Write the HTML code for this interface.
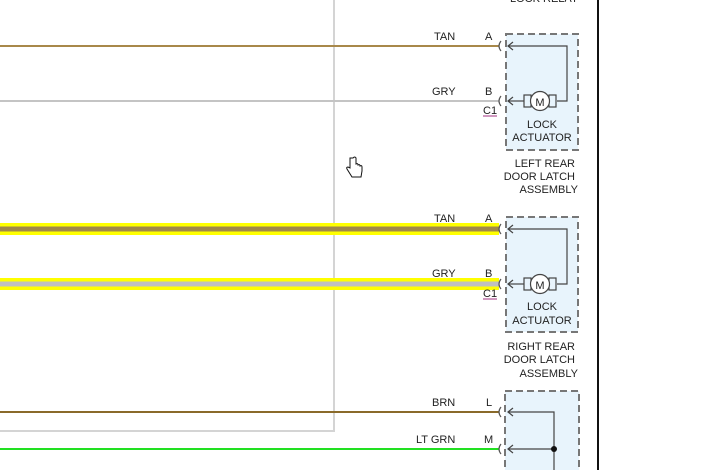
<!DOCTYPE html>
<html><head><meta charset="utf-8"><style>
html,body{margin:0;padding:0;background:#fff;}
svg{display:block;}
text{font-family:"Liberation Sans",Arial,sans-serif;font-size:11px;fill:#222;}
</style></head><body>
<svg width="704" height="470" viewBox="0 0 704 470" xmlns="http://www.w3.org/2000/svg">
<rect width="704" height="470" fill="#fff"/>
<line x1="334" y1="0" x2="334" y2="431" stroke="#d4d4d4" stroke-width="2"/>
<line x1="0" y1="431" x2="335" y2="431" stroke="#d4d4d4" stroke-width="2"/>
<line x1="598" y1="0" x2="598" y2="470" stroke="#111" stroke-width="2"/>
<text x="510" y="2" font-size="11">LOCK RELAY</text>

<line x1="0" y1="46" x2="499" y2="46" stroke="#a8884a" stroke-width="2"/>
<line x1="0" y1="101" x2="499" y2="101" stroke="#c4c4c4" stroke-width="2"/>
<text x="434" y="40">TAN</text><text x="485" y="40">A</text>
<text x="432" y="95">GRY</text><text x="485" y="95">B</text>
<text x="483" y="114" fill="#333">C1</text><line x1="483" y1="116" x2="497" y2="116" stroke="#a03080" stroke-width="1"/>

<rect x="0" y="223" width="499" height="12" fill="#ffff00"/>
<line x1="0" y1="229" x2="499" y2="229" stroke="#a0884a" stroke-width="5"/>
<rect x="0" y="278" width="499" height="12" fill="#ffff00"/>
<line x1="0" y1="284" x2="499" y2="284" stroke="#c0c0c0" stroke-width="5"/>
<text x="434" y="222">TAN</text><text x="485" y="222">A</text>
<text x="432" y="277">GRY</text><text x="485" y="277">B</text>
<text x="483" y="297" fill="#333">C1</text><line x1="483" y1="299" x2="497" y2="299" stroke="#a03080" stroke-width="1"/>

<line x1="0" y1="412" x2="499" y2="412" stroke="#8a6a2a" stroke-width="2"/>
<line x1="0" y1="449" x2="499" y2="449" stroke="#22e022" stroke-width="2"/>
<text x="432" y="406">BRN</text><text x="486" y="406">L</text>
<text x="416" y="443">LT GRN</text><text x="484" y="443" fill="#1a3a9a">M</text>

<g fill="none" stroke="#555" stroke-width="1.2">
<path d="M501 41 Q497 46 501 51"/><path d="M501 96 Q497 101 501 106"/>
<path d="M501 224 Q497 229 501 234"/><path d="M501 279 Q497 284 501 289"/>
<path d="M501 407 Q497 412 501 417"/><path d="M501 444 Q497 449 501 454"/>
</g>

<g stroke="#777" stroke-width="2" stroke-dasharray="7,4" fill="#e8f4fc">
<rect x="506" y="34" width="72" height="116"/>
<rect x="506" y="217" width="72" height="115"/>
<rect x="505" y="391" width="74" height="85"/>
</g>

<g fill="none" stroke="#444" stroke-width="1.2">
<path d="M508 46 H567 V101 H557"/>
<path d="M513 42 L508 46 L513 50"/>
<path d="M524 101 H508"/><path d="M513 97 L508 101 L513 105"/>
<rect x="524" y="95" width="7" height="12"/><rect x="549" y="95" width="7" height="12"/>
<circle cx="540" cy="101" r="9.5" fill="#fff"/>
<path d="M508 229 H567 V284 H557"/>
<path d="M513 225 L508 229 L513 233"/>
<path d="M524 284 H508"/><path d="M513 280 L508 284 L513 288"/>
<rect x="524" y="278" width="7" height="12"/><rect x="549" y="278" width="7" height="12"/>
<circle cx="540" cy="284" r="9.5" fill="#fff"/>
<path d="M508 412 H554 V470"/><path d="M513 408 L508 412 L513 416"/>
<path d="M508 449 H554"/><path d="M513 445 L508 449 L513 453"/>
</g>
<circle cx="554" cy="449" r="3" fill="#111"/>
<text x="540" y="106" text-anchor="middle" font-size="14">M</text>
<text x="540" y="289" text-anchor="middle" font-size="14">M</text>

<text x="542" y="128" text-anchor="middle">LOCK</text>
<text x="542" y="141" text-anchor="middle">ACTUATOR</text>
<text x="575" y="167" text-anchor="end">LEFT REAR</text>
<text x="575" y="180" text-anchor="end">DOOR LATCH</text>
<text x="578" y="193" text-anchor="end">ASSEMBLY</text>

<text x="542" y="310" text-anchor="middle">LOCK</text>
<text x="542" y="324" text-anchor="middle">ACTUATOR</text>
<text x="575" y="350" text-anchor="end">RIGHT REAR</text>
<text x="575" y="363" text-anchor="end">DOOR LATCH</text>
<text x="578" y="377" text-anchor="end">ASSEMBLY</text>

<path d="M350 158 v10 l-2 -1 q-2 0 -1 2 l5 8 h9 l1 -6 v-4 q0 -2 -2 -1 q0 -2 -2 -1 q0 -2 -2 -1 v-6 q-1 -2 -3 0 z" fill="#fff" stroke="#111" stroke-width="1"/>
</svg>
</body></html>
